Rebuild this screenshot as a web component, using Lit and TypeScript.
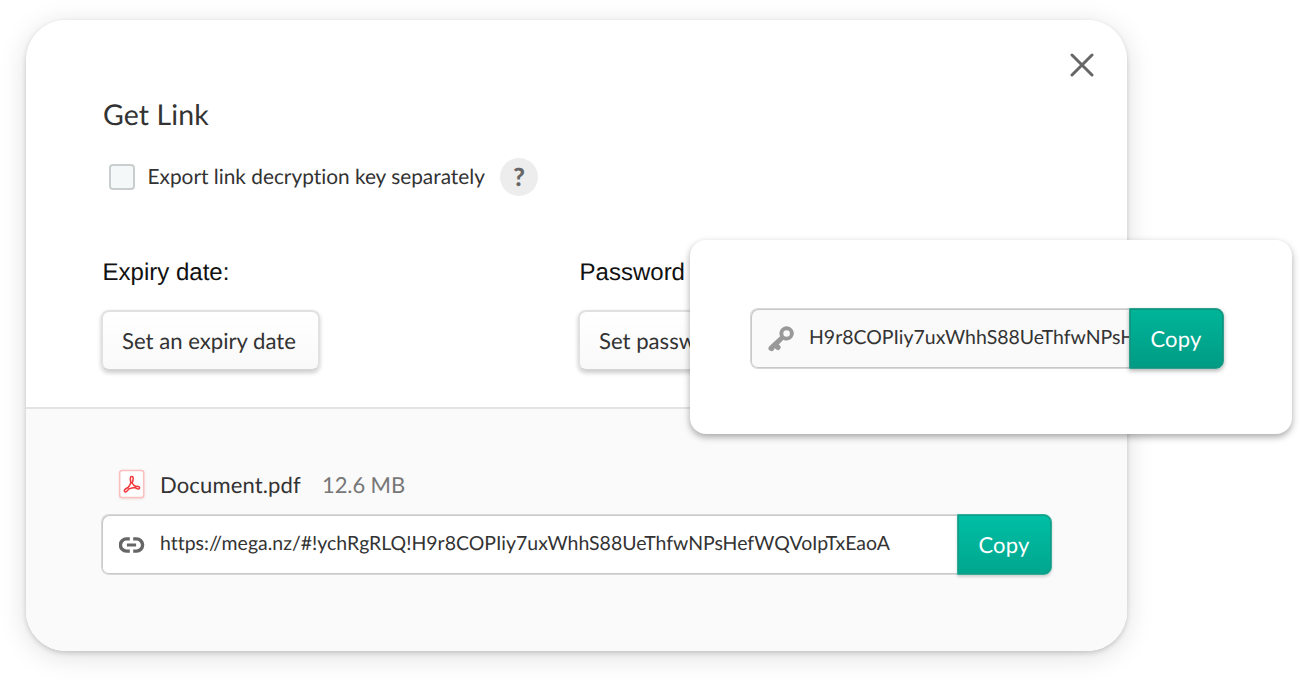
import { LitElement, html, css, svg } from "lit";
import { customElement, property } from "lit/decorators.js";

const keyIcon = svg`<svg class="icon" width="26" height="26" viewBox="0 0 26 26">
  <path fill="#999" fill-rule="evenodd" d="M18.600 0.300a7.100 7.100 0 1 1-3.200 13.400l-4.700 4.700 1.200 1a2.700 2.700 0 1 1-4.100 3.700l-1-.8-1 1.700a2.900 2.900 0 0 1-4.700-3.500L12.100 10.300A7.100 7.100 0 0 1 18.600.3zm0 3.900a3.300 3.300 0 1 0 0 6.600 3.300 3.300 0 0 0 0-6.600z"/></svg>`;

const linkIcon = svg`<svg class="icon" width="26" height="16" viewBox="0.500 0 26 16">
  <g fill="none" stroke="#666" stroke-width="3.4">
    <path d="M11.300 1.900H8a6.100 6.100 0 0 0 0 12.200h3.300M14.700 1.900H18a6.100 6.100 0 0 1 0 12.200h-3.300"/><path d="M8.400 8h9.200" stroke-width="3"/></g></svg>`;

const pdfIcon = svg`<svg class="pdf" width="28" height="32" viewBox="0 0 28 32">
  <rect x="1.700" y="1.500" width="24" height="27" rx="2.500" fill="#fff" stroke="#f9c0c0" stroke-width="1.500"/>
  <g fill="none" stroke="#f0373a" stroke-width="1.500" stroke-linejoin="round">
    <path d="M12.300 9.200c0-2.200 2.900-2.200 2.900 0 0 1.700-.5 3.300-1.100 4.800.9 1.700 2.200 2.800 3.700 3.400 1.300-.2 2.600 0 3.300.5 1.200 1 .2 2.400-1.400 2-1-.3-2-.8-2.900-1.500-2.100.1-4.100.7-5.900 1.500-1 1.500-1.900 2.500-2.800 2.900-1.500.5-2.500-1-1.300-2.200.9-.9 2-1.500 3.300-2.100 1.200-1.400 2.100-3 2.800-4.700-.4-1.500-.6-3.100-.6-4.600z"/></g></svg>`;

@customElement("copy-field")
export class CopyField extends LitElement {
  @property() value = "";
  @property() kind = "link";

  static styles = css`
    :host { display: block; }
    .field { display: flex; height: 61px; }
    .box {
      flex: 1; min-width: 0; box-sizing: border-box; display: flex; overflow: hidden;
      border: 1px solid #d8d8d8; border-right: 0; border-radius: 8px 0 0 8px;
      box-shadow: inset 1px 1px #c9c9c9, inset 0 -1px #c9c9c9;
      background: #fff; padding: 1px 0 0 17px; gap: 15px;
    }
    .icon { flex: none; margin-top: 21px; }
    .key .box { background: #fafafa; }
    .key .icon { margin-top: 16px; }
    .value { font-size: 19.48px; line-height: 55px; white-space: nowrap; color: #333; text-rendering: geometricPrecision; }
    button {
      flex: none; width: 95px; box-sizing: border-box; padding: 0 1px 0 0; margin: 0;
      border: 1px solid #2fae99; border-radius: 0 8px 8px 0;
      background: linear-gradient(#00bfa5, #00a68e); color: #fff; text-rendering: geometricPrecision;
      font: 22px/59px Lato, sans-serif; letter-spacing: 0.2px;
      box-shadow: inset 0 0 0 1px #109c86, 0 2px 3px rgba(0, 0, 0, 0.16);
    }
    .key button {
      background: linear-gradient(#00b599, #009b84); border-color: #2aa28e;
      box-shadow: inset 0 0 0 1px #0d937e, 0 2px 4px rgba(0, 0, 0, 0.3);
    }
  `;

  render() {
    return html`<div class="field ${this.kind}">
      <div class="box">${this.kind === "key" ? keyIcon : linkIcon}<span class="value">${this.value}</span></div>
      <button>Copy</button>
    </div>`;
  }
}

@customElement("app-root")
export class AppRoot extends LitElement {
  static styles = css`
    :host {
      display: block; position: relative; width: 1300px; height: 686px; overflow: hidden;
      box-sizing: border-box; padding: 20px 26px; background: #fff;
      font-family: Lato, sans-serif; color: #333; text-rendering: geometricPrecision;
      font-variant-ligatures: none;
    }
    .dialog {
      width: 1101px; height: 631px; border-radius: 40px; overflow: hidden;
      display: flex; flex-direction: column; background: #fff;
    }
    .frame {
      width: 1101px; border-radius: 40px;
      box-shadow: 0 2px 5px rgba(0, 0, 0, 0.17), 0 5px 28px rgba(0, 0, 0, 0.13);
    }
    .top { height: 387px; box-sizing: border-box; padding: 33px 33px 0 76px; }
    .close { display: block; margin-left: auto; }
    h1 { margin: 20px 0 0 1px; font-size: 28.5px; letter-spacing: 0.1px; font-weight: 400; line-height: 36px; white-space: nowrap; }
    .option { display: flex; align-items: center; height: 38px; margin: 25px 0 0 7px; }
    .check { width: 26px; height: 26px; box-sizing: border-box; border: 2px solid #c9cfce; border-radius: 4px; background: #f5f8f8; }
    .label { width: 352.5px; margin-left: 12.5px; font-size: 20.83px; line-height: 34px; white-space: nowrap; }
    .help {
      width: 38px; height: 38px; border-radius: 50%; background: #ededed; color: #666;
      text-align: center; font-size: 25px; font-weight: 900; line-height: 39px;
    }
    .settings { display: grid; grid-template-columns: 477px 477px; margin-top: 61px; }
    .caption { font: 24px/32px "Liberation Sans", Arial, sans-serif; color: #111; white-space: nowrap; margin-left: 0.6px; }
    .set {
      display: block; margin: 21px 0 0 -1px; height: 61px; box-sizing: border-box; padding: 0 19px;
      border: 2px solid #e1e1e1; border-bottom-color: #d4d4d4; border-radius: 8px;
      background: linear-gradient(#fff, #f9f9f9); color: #333; white-space: nowrap;
      font: 22.15px/58px Lato, sans-serif; box-shadow: 0 2px 4px rgba(0, 0, 0, 0.2);
      width: 219px; text-align: left; text-rendering: geometricPrecision;
    }
    .bottom {
      flex: 1; box-sizing: border-box; border-top: 2px solid #e3e3e3; background: #fafafa;
      padding: 59px 75px 0;
    }
    .file { display: flex; height: 34px; margin-bottom: 12px; padding-left: 17px; font-size: 22px; line-height: 34px; white-space: nowrap; }
    .pdf { flex: none; margin: 1px 14px 0 0; filter: drop-shadow(0 1px 1px rgba(220, 60, 60, 0.15)); }
    .name { width: 162px; letter-spacing: 0.15px; }
    .size { color: #777; letter-spacing: -0.1px; }
    .popup {
      position: absolute; left: 690px; top: 240px; width: 602px; height: 194px; box-sizing: border-box;
      padding: 68px 68px 0 60px; border-radius: 16px; background: #fff;
      box-shadow: 0 3px 7px rgba(0, 0, 0, 0.34);
    }
  `;

  render() {
    return html`
      <div class="frame"><div class="dialog">
        <div class="top">
          <svg class="close" width="24" height="24" viewBox="0 0 24 24">
            <path d="M2 2l20 20M22 2L2 22" stroke="#666" stroke-width="3" stroke-linecap="round"/>
          </svg>
          <h1>Get Link</h1>
          <div class="option">
            <span class="check"></span>
            <span class="label">Export link decryption key separately</span>
            <span class="help">?</span>
          </div>
          <div class="settings">
            <div><div class="caption">Expiry date:</div><button class="set">Set an expiry date</button></div>
            <div><div class="caption">Password</div><button class="set">Set password</button></div>
          </div>
        </div>
        <div class="bottom">
          <div class="file">${pdfIcon}<span class="name">Document.pdf</span><span class="size">12.6 MB</span></div>
          <copy-field value="https://mega.nz/#!ychRgRLQ!H9r8COPIiy7uxWhhS88UeThfwNPsHefWQVoIpTxEaoA"></copy-field>
        </div>
      </div></div>
      <div class="popup"><copy-field kind="key" value="H9r8COPIiy7uxWhhS88UeThfwNPsHefWQVoIpTxEaoA"></copy-field></div>
    `;
  }
}
